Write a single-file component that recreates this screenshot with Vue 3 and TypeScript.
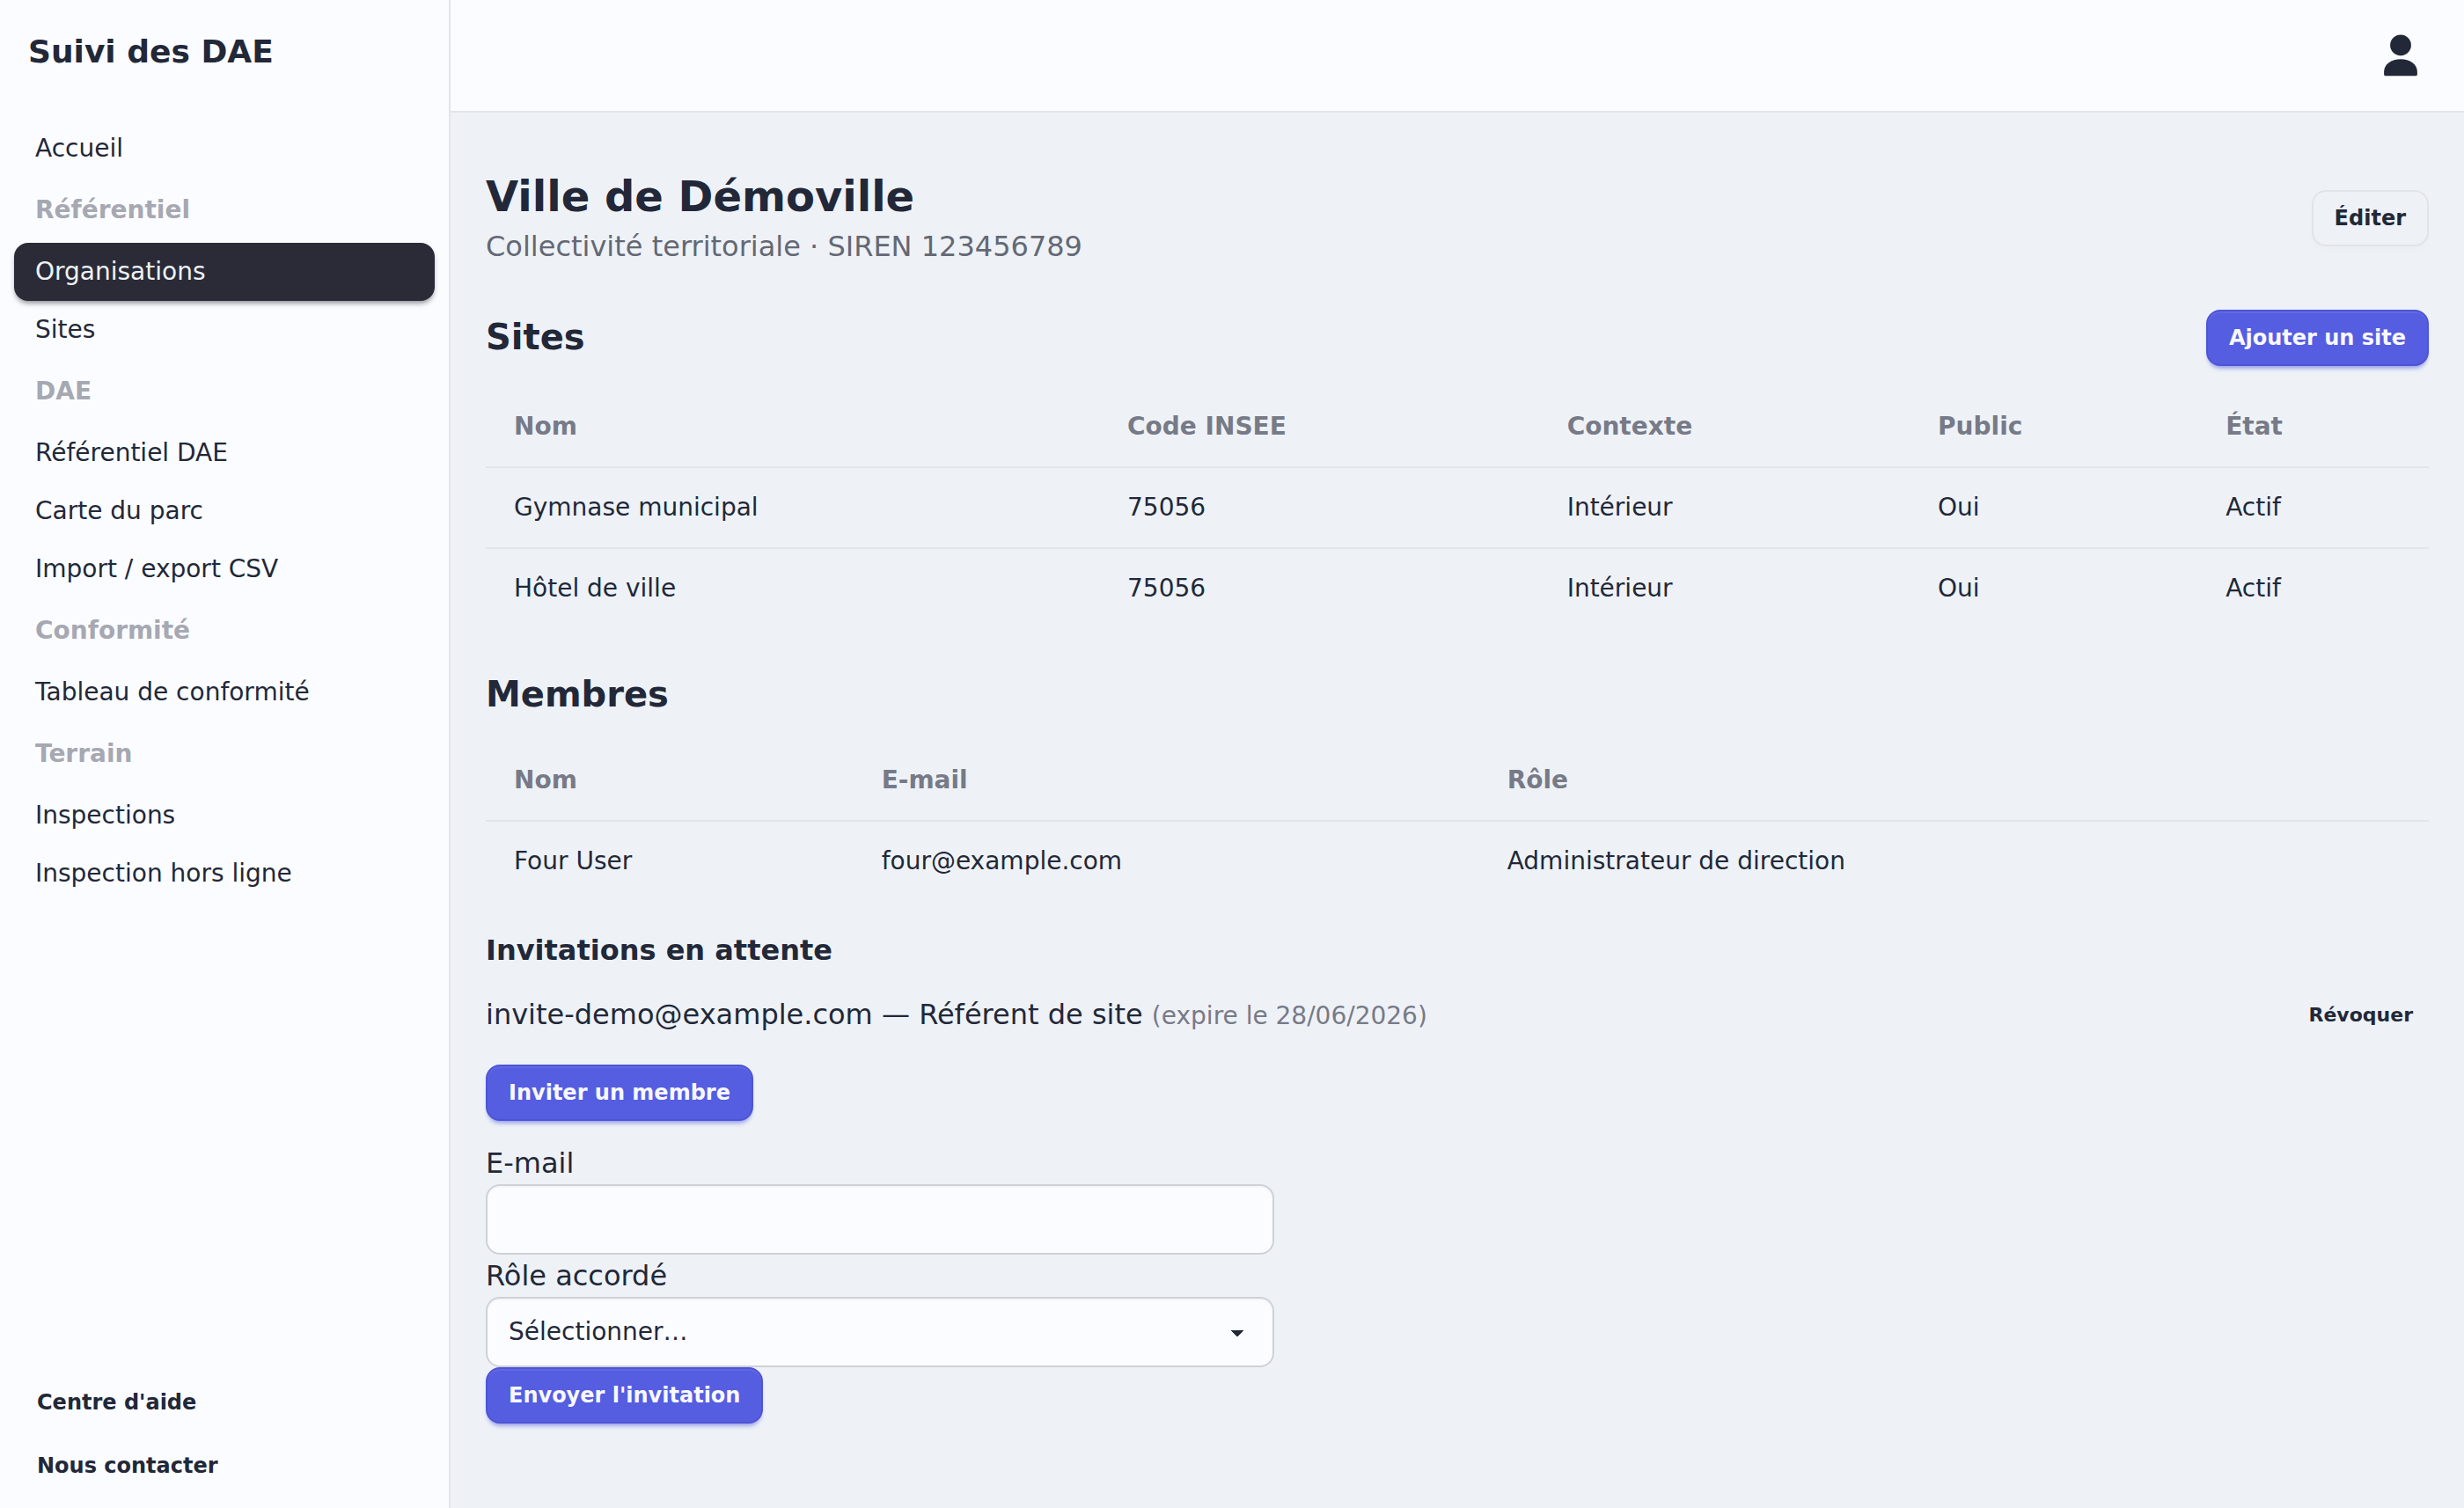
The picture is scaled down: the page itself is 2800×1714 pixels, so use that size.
<script setup lang="ts">
interface NavEntry {
  label: string
  title?: boolean
  active?: boolean
}

const nav: NavEntry[] = [
  { label: 'Accueil' },
  { label: 'Référentiel', title: true },
  { label: 'Organisations', active: true },
  { label: 'Sites' },
  { label: 'DAE', title: true },
  { label: 'Référentiel DAE' },
  { label: 'Carte du parc' },
  { label: 'Import / export CSV' },
  { label: 'Conformité', title: true },
  { label: 'Tableau de conformité' },
  { label: 'Terrain', title: true },
  { label: 'Inspections' },
  { label: 'Inspection hors ligne' },
]

const siteColumns: string[] = ['Nom', 'Code INSEE', 'Contexte', 'Public', 'État']
const sites: string[][] = [
  ['Gymnase municipal', '75056', 'Intérieur', 'Oui', 'Actif'],
  ['Hôtel de ville', '75056', 'Intérieur', 'Oui', 'Actif'],
]

// The last column is reserved for row actions and has no heading.
const memberColumns: string[] = ['Nom', 'E-mail', 'Rôle', '']
const members: string[][] = [['Four User', 'four@example.com', 'Administrateur de direction', '']]
</script>

<template>
  <div class="layout">
    <aside class="sidebar">
      <div class="brand">Suivi des DAE</div>
      <nav class="menu">
        <template v-for="entry in nav" :key="entry.label + (entry.title ? '-t' : '')">
          <div v-if="entry.title" class="menu-title">{{ entry.label }}</div>
          <a v-else class="menu-item" :class="{ active: entry.active }">{{ entry.label }}</a>
        </template>
      </nav>
      <div class="support">
        <a class="btn ghost left">Centre d'aide</a>
        <a class="btn ghost left">Nous contacter</a>
      </div>
    </aside>

    <div class="page">
      <header class="topbar">
        <svg class="user-icon" viewBox="0 0 38 48" fill="currentColor" aria-hidden="true">
          <circle cx="19" cy="12.3" r="11.9" />
          <path d="M19 28.2C8.5 28.2 .1 34 .1 42.5V45.6Q.1 47.2 1.6 47.2H36.4Q37.9 47.2 37.9 45.6V42.5C37.9 34 29.5 28.2 19 28.2Z" />
        </svg>
      </header>

      <main class="content">
        <div class="row heading">
          <div>
            <h1>Ville de Démoville</h1>
            <p class="subtitle">Collectivité territoriale · SIREN 123456789</p>
          </div>
          <button class="btn outline">Éditer</button>
        </div>

        <section class="block">
          <div class="row sites-head">
            <h2>Sites</h2>
            <button class="btn primary">Ajouter un site</button>
          </div>
          <table>
            <thead>
              <tr><th v-for="c in siteColumns" :key="c">{{ c }}</th></tr>
            </thead>
            <tbody>
              <tr v-for="s in sites" :key="s[0]"><td v-for="(v, i) in s" :key="i">{{ v }}</td></tr>
            </tbody>
          </table>
        </section>

        <section>
          <h2 class="members-head">Membres</h2>
          <table>
            <thead>
              <tr><th v-for="c in memberColumns" :key="c">{{ c }}</th></tr>
            </thead>
            <tbody>
              <tr v-for="m in members" :key="m[0]"><td v-for="(v, i) in m" :key="i">{{ v }}</td></tr>
            </tbody>
          </table>

          <h3>Invitations en attente</h3>
          <div class="row invite">
            <span>invite-demo@example.com — Référent de site <span class="expiry">(expire le 28/06/2026)</span></span>
            <button class="btn ghost tiny">Révoquer</button>
          </div>

          <button class="btn primary">Inviter un membre</button>

          <form class="invite-form" @submit.prevent>
            <label for="email">E-mail</label>
            <input id="email" class="field" type="email" />
            <label>Rôle accordé</label>
            <div class="field select">
              <span>Sélectionner…</span>
              <svg class="caret" viewBox="0 0 15 7" shape-rendering="crispEdges" aria-hidden="true">
                <path d="M0 0H15L8 7Z" fill="currentColor" />
              </svg>
            </div>
            <button class="btn primary" type="submit">Envoyer l'invitation</button>
          </form>
        </section>
      </main>
    </div>
  </div>
</template>

<style>
html,
body {
  margin: 0;
  background: #eef2f7;
}
</style>

<style scoped>
.layout,
.layout * {
  box-sizing: border-box;
}
.layout {
  display: flex;
  width: 100%;
  height: 1714px;
  overflow: hidden;
  font-family: 'DejaVu Sans', sans-serif;
  font-size: 32px;
  line-height: 48px;
  color: #222838;
  background: #eef2f7;
}
.sidebar {
  width: 512px;
  flex: none;
  display: flex;
  flex-direction: column;
  background: #fbfcff;
  border-right: 2px solid #e3e3ed;
}
.brand {
  padding: 32px 32px 34px;
  font-size: 36px;
  line-height: 54px;
  font-weight: 700;
}
.menu {
  flex: 1;
  display: flex;
  flex-direction: column;
  padding: 16px;
  font-size: 28px;
  line-height: 42px;
}
.menu-item {
  padding: 12px 24px;
  border-radius: 16px;
}
.menu-item.active {
  color: #eef2f7;
  background: #2a2b37;
  box-shadow: 0 4px 6px -2px rgba(42, 43, 55, 0.6);
}
.menu-title {
  padding: 16px 24px;
  font-weight: 700;
  color: #a6a8b2;
}
.support {
  display: flex;
  flex-direction: column;
  gap: 8px;
  padding: 16px;
}
.page {
  flex: 1;
  min-width: 0;
}
.topbar {
  height: 128px;
  display: flex;
  justify-content: flex-end;
  align-items: center;
  padding-right: 53px;
  background: #fbfcff;
  border-bottom: 2px solid #e3e3ed;
}
.user-icon {
  width: 38px;
  height: 48px;
}
.content {
  padding: 64px 40px 0;
}
.row {
  display: flex;
  align-items: center;
  justify-content: space-between;
}
.heading {
  margin-bottom: 48px;
}
h1,
h2,
h3,
p {
  margin: 0;
}
h1 {
  padding-bottom: 2px;
  font-size: 48px;
  line-height: 62px;
}
h2 {
  padding-bottom: 2px;
  font-size: 40px;
  line-height: 54px;
}
h3 {
  margin-top: 32px;
  font-size: 32px;
  line-height: 48px;
}
.subtitle {
  color: #646874;
}
.block {
  margin-bottom: 48px;
}
.sites-head,
.members-head {
  margin-bottom: 24px;
}
table {
  width: 100%;
  border-collapse: separate;
  border-spacing: 0;
  font-size: 28px;
  line-height: 42px;
  text-align: left;
}
th,
td {
  padding: 24px 32px;
}
th {
  color: #777a87;
  font-weight: 700;
}
thead th,
tbody tr:not(:last-child) td {
  border-bottom: 2px solid #e2e5ea;
}
.invite {
  height: 50px;
  margin: 25px 0 31px;
}
.expiry {
  font-size: 28px;
  color: #777a87;
}
.btn {
  display: inline-flex;
  align-items: center;
  justify-content: center;
  height: 64px;
  padding: 0 24px;
  border: 2px solid transparent;
  border-radius: 16px;
  background: transparent;
  font-family: inherit;
  font-size: 24px;
  line-height: 36px;
  font-weight: 700;
  color: inherit;
}
.btn.left {
  justify-content: flex-start;
}
.btn.outline {
  border-color: #e1e3e8;
  box-shadow: 0 6px 6px -4px rgba(225, 227, 232, 0.35);
}
.btn.primary {
  display: flex;
  color: #f7f8ff;
  background: #555de1;
  border-color: #4e55d4;
  box-shadow:
    inset 0 2px 0 rgba(255, 255, 255, 0.07),
    0 6px 6px -4px rgba(86, 94, 226, 0.35),
    0 4px 4px -2px rgba(86, 94, 226, 0.4);
}
.btn.tiny {
  height: 48px;
  padding: 0 16px;
  font-size: 22px;
}
.invite-form {
  display: flex;
  flex-direction: column;
  align-items: flex-start;
  width: 896px;
  padding-top: 24px;
}
.field {
  display: flex;
  align-items: center;
  justify-content: space-between;
  width: 100%;
  height: 80px;
  padding: 0 24px;
  border: 2px solid #cfd1d7;
  border-radius: 16px;
  background: #fbfcff;
  box-shadow: inset 0 2px 2px rgba(35, 40, 56, 0.03);
  outline: none;
  font-size: 28px;
  line-height: 42px;
}
.select {
  padding-right: 33px;
}
.caret {
  width: 15px;
  height: 7px;
  margin-top: 3px;
}
</style>
